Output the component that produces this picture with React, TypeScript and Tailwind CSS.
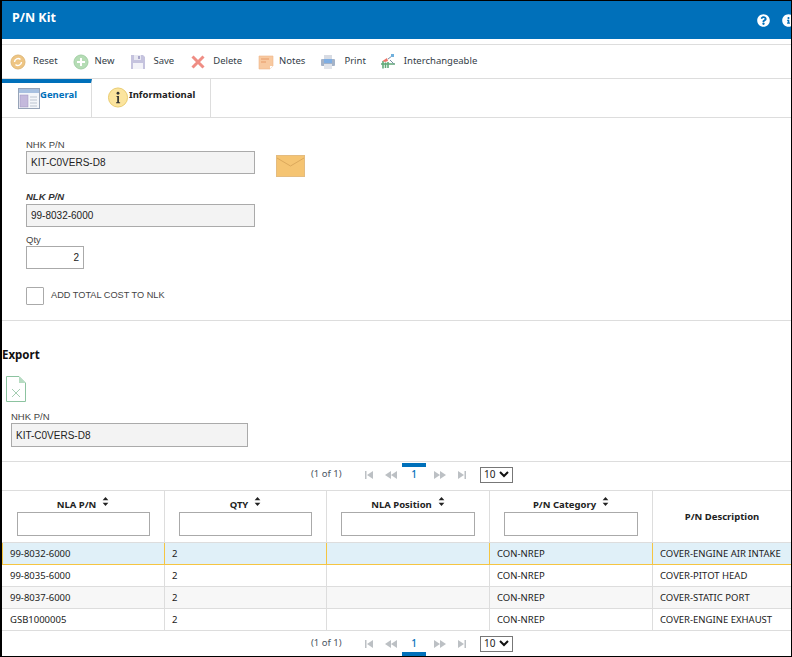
import React from "react";
import { FaQuestionCircle, FaInfoCircle } from "react-icons/fa";

const UI = "font-['Noto_Sans','Open_Sans',sans-serif]";
const AR = "font-['Liberation_Sans',Arial,sans-serif]";

const ResetIcon = () => (
  <svg width="16" height="16" viewBox="0 0 16 16"><circle cx="8" cy="8" r="7" fill="#eec583" stroke="#e0b878" /><path d="M4.500 8a3.500 3.500 0 0 1 6-2.400M11.500 8a3.500 3.500 0 0 1-6 2.400" fill="none" stroke="#fff" strokeWidth="1.400" /></svg>
);
const NewIcon = () => (
  <svg width="16" height="16" viewBox="0 0 16 16"><circle cx="8" cy="8" r="7" fill="#b5dcb5" stroke="#a3d0a5" /><path d="M8 4v8M4 8h8" stroke="#fff" strokeWidth="2" /></svg>
);
const SaveIcon = () => (
  <svg width="16" height="16" viewBox="0 0 16 16"><path d="M1 1h12l2 2v12H1z" fill="#c5c3de" /><rect x="4" y="1" width="7" height="5" fill="#e8e8f2" /><rect x="8" y="2" width="2" height="3" fill="#a9a7c9" /><rect x="3" y="9" width="10" height="6" fill="#f3f3f8" /></svg>
);
const DeleteIcon = () => (
  <svg width="16" height="16" viewBox="0 0 16 16"><path d="M2.500 2.500l11 11M13.500 2.500l-11 11" stroke="#ef8d84" strokeWidth="3" /></svg>
);
const NotesIcon = () => (
  <svg width="16" height="16" viewBox="0 0 16 16"><path d="M1 2h14v10l-3 3H1z" fill="#f8c9a0" stroke="#efb68a" strokeWidth=".6" /><path d="M3 5h8M3 8h5" stroke="#e79a68" /><path d="M12 15v-3h3z" fill="#fff" /></svg>
);
const PrintIcon = () => (
  <svg width="16" height="16" viewBox="0 0 16 16"><rect x="4" y="1" width="8" height="5" fill="#d7dbe3" /><rect x="1" y="5" width="14" height="7" rx="1" fill="#a5b3c8" /><rect x="4" y="5" width="8" height="4" fill="#7faee3" /><rect x="4" y="10" width="8" height="5" fill="#e1e4ea" /></svg>
);
const InterIcon = () => (
  <svg width="16" height="17" viewBox="0 0 16 17"><path d="M1 11h14M3 15.500V8M5.500 15V9.500M8 15V9" stroke="#62a978" strokeWidth="1.600" /><path d="M2.500 8L7 5l1 3-3 1z" fill="#ec7468" /><path d="M8 6l4-3M10 7l4 4" stroke="#7a8fa5" /><rect x="11" y="1" width="3" height="3" fill="#6fb0dd" /></svg>
);
const GeneralIcon = () => (
  <svg width="22" height="21" viewBox="0 0 22 21"><rect x=".5" y=".5" width="21" height="20" fill="#f4f6fa" stroke="#97a4b8" /><rect x="1" y="1" width="20" height="4" fill="#a8c0e0" /><rect x="2" y="7" width="8" height="12" fill="#c4b9dc" stroke="#9c93bf" strokeWidth=".5" /><path d="M12 9h7M12 12h7M12 15h7M12 18h7" stroke="#bcc4d0" /></svg>
);
const InfoIcon = () => (
  <svg width="22" height="21" viewBox="0 0 22 22"><circle cx="11" cy="11" r="10" fill="#fbe49e" stroke="#e8c96b" /><circle cx="11" cy="6.500" r="1.500" fill="#333" /><path d="M9.500 9.500h2.500v6.500h1.200v1H9v-1h1.200v-5.500H9.500z" fill="#333" /></svg>
);
const Envelope = () => (
  <svg width="29" height="22" viewBox="0 0 29 22"><rect x=".5" y=".5" width="28" height="21" fill="#f5c472" stroke="#e4bc80" /><path d="M1 3l13.500 8L28 3" fill="none" stroke="#dca95c" /></svg>
);
const Excel = () => (
  <svg width="20" height="26" viewBox="0 0 20 26"><path d="M.5.5h12.500l6.500 6.500v18.500H.5z" fill="#fff" stroke="#8cc3a0" /><path d="M13 .5v6.500h6.500z" fill="#b7dcc2" /><path d="M6 13l8 8M14 13l-8 8" stroke="#a5cdb2" /></svg>
);
const Sort = () => (
  <svg className="ml-[6px] -mt-[7px] shrink-0" width="7" height="9" viewBox="0 0 8 11"><path d="M4 0l3.500 4H.5zM4 11L.5 7h7z" fill="#222" /></svg>
);

const Tool = ({ icon, label, cls }: { icon: React.ReactNode; label: string; cls: string }) => (
  <div className={`flex items-center ${cls}`}>
    {icon}
    <span className="text-[9.500px] text-[#333d47]">{label}</span>
  </div>
);

const Field = ({ label, value, italic, box }: { label: string; value: string; italic?: boolean; box: string }) => (
  <div className={AR}>
    <div className={`text-[9.500px] ${italic ? "h-[14px] leading-[14px] font-bold italic text-[#333]" : "h-[13px] leading-[13px] text-[#444]"}`}>{label}</div>
    <div className={`flex items-center border border-[#aaa] bg-[#f3f3f3] pl-[4px] text-[10px] text-[#222] ${box}`}>{value}</div>
  </div>
);

const Pager = ({ bar }: { bar: "top" | "bottom" }) => (
  <div className={`flex items-center text-[#555] ${bar === "top" ? "h-[29px] border-t border-[#ddd] pb-[3px]" : "h-[25px]"}`}>
    <span className="ml-[309px] w-[54px] text-[9.500px] text-[#4b5563]">(1 of 1)</span>
    <svg width="8" height="10" viewBox="0 0 8 10"><path d="M0 1h1.500v8H0zM8 1v8L2 5z" fill="#bcc0c4" /></svg>
    <svg className="ml-[12px]" width="12" height="10" viewBox="0 0 12 10"><path d="M6 1v8L0 5zM12 1v8L6 5z" fill="#bcc0c4" /></svg>
    <div className="relative ml-[5px] flex h-[14px] w-[24px] items-center justify-center text-[10px] font-medium text-[#0070ba]">
      1
      <div className={`absolute left-0 h-[4px] w-[24px] bg-[#0070ba] ${bar === "top" ? "top-[-5px]" : "top-[15px]"}`} />
    </div>
    <svg className="ml-[8px]" width="12" height="10" viewBox="0 0 12 10"><path d="M0 1v8l6-4zM6 1v8l6-4z" fill="#bcc0c4" /></svg>
    <svg className="ml-[12px]" width="8" height="10" viewBox="0 0 8 10"><path d="M0 1v8l6-4zM6.500 1H8v8H6.500z" fill="#bcc0c4" /></svg>
    <div className="ml-[14px] flex h-[16px] w-[33px] items-center justify-between border border-[#777] px-[3px] text-[10px] text-[#222]">
      10
      <svg width="10" height="7" viewBox="0 0 10 7"><path d="M1 1l4 4 4-4" fill="none" stroke="#111" strokeWidth="2" /></svg>
    </div>
  </div>
);

const cols = ["w-[163px]", "w-[162px]", "w-[163px]", "w-[163px]", "flex-1"];

const Head = ({ label, cls, wide }: { label: string; cls: string; wide: string }) => (
  <div className={`${cls} flex shrink-0 flex-col items-center border-r border-[#ddd]`}>
    <div className="flex h-[21px] items-center pt-[7px] text-[9.500px] font-bold text-[#222]">
      {label}
      <Sort />
    </div>
    <div className={`h-[24px] ${wide} border border-[#aaa] bg-white`} />
  </div>
);

const rows = [
  ["99-8032-6000", "2", "", "CON-NREP", "COVER-ENGINE AIR INTAKE"],
  ["99-8035-6000", "2", "", "CON-NREP", "COVER-PITOT HEAD"],
  ["99-8037-6000", "2", "", "CON-NREP", "COVER-STATIC PORT"],
  ["GSB1000005", "2", "", "CON-NREP", "COVER-ENGINE EXHAUST"],
];

export default function App() {
  return (
    <div className={`h-[657px] w-[792px] overflow-hidden border-t border-b border-l-2 border-r border-black bg-white ${UI}`}>
      <div className="flex h-[38px] items-center justify-between bg-[#0070ba] pl-[10px]">
        <span className="pb-[3px] text-[12.500px] font-bold text-white">P/N Kit</span>
        <div className="flex h-full w-[34px] items-center gap-[12px] overflow-hidden text-white">
          <FaQuestionCircle className="shrink-0 text-[13px]" />
          <FaInfoCircle className="shrink-0 text-[13px]" />
        </div>
      </div>

      <div className="mt-[5px] flex h-[35px] items-center gap-[15px] border-y border-[#ddd] pl-[8px]">
        <Tool icon={<ResetIcon />} label="Reset" cls="gap-[7px]" />
        <Tool icon={<NewIcon />} label="New" cls="gap-[6px]" />
        <Tool icon={<SaveIcon />} label="Save" cls="ml-[1px] gap-[7px]" />
        <Tool icon={<DeleteIcon />} label="Delete" cls="ml-[1px] gap-[7px]" />
        <Tool icon={<NotesIcon />} label="Notes" cls="ml-[1px] gap-[5px]" />
        <Tool icon={<PrintIcon />} label="Print" cls="gap-[8px]" />
        <Tool icon={<InterIcon />} label="Interchangeable" cls="-ml-[1px] gap-[8px]" />
      </div>

      <div className="flex h-[39px] border-b border-[#ddd]">
        <div className="flex w-[90px] border-t-[4px] border-r border-t-[#0070ba] border-r-[#ddd] pt-[5px] pl-[16px]">
          <GeneralIcon />
          <span className="text-[9.500px] leading-[14px] font-bold text-[#0070ba]">General</span>
        </div>
        <div className="flex w-[119px] border-r border-[#ddd] pt-[8px] pl-[15px]">
          <InfoIcon />
          <span className="mt-[1px] text-[9.500px] leading-[14px] font-bold text-[#222]">Informational</span>
        </div>
      </div>

      <div className="h-[203px] border-b border-[#ddd] pt-[20px] pl-[24px]">
        <div className="flex">
          <Field label="NHK P/N" value="KIT-C0VERS-D8" box="h-[23px] w-[229px]" />
          <div className="mt-[17px] ml-[21px]"><Envelope /></div>
        </div>
        <div className="mt-[13px]"><Field label="NLK P/N" value="99-8032-6000" italic box="h-[23px] w-[229px]" /></div>
        <div className={`mt-[6px] ${AR}`}>
          <div className="h-[13px] text-[9.500px] leading-[13px] text-[#444]">Qty</div>
          <div className="flex h-[23px] w-[58px] items-center justify-end border border-[#aaa] pr-[4px] text-[10px] text-[#222]">2</div>
        </div>
        <div className={`mt-[18px] flex items-center ${AR}`}>
          <div className="h-[18px] w-[18px] rounded-[1px] border border-[#aaa]" />
          <span className="ml-[7px] text-[9.200px] text-[#444]">ADD TOTAL COST TO NLK</span>
        </div>
      </div>

      <div className="h-[140px]">
        <div className="h-[44px] pt-[26px] text-[11.500px] leading-[16px] font-bold text-[#111]">Export</div>
        <div className="mt-[11px] ml-[4px] h-[26px]"><Excel /></div>
        <div className="mt-[8px] ml-[9px]"><Field label="NHK P/N" value="KIT-C0VERS-D8" box="h-[24px] w-[237px]" /></div>
      </div>

      <Pager bar="top" />

      <div className="flex h-[53px] border-y border-[#ddd]">
        <Head label="NLA P/N" cls={cols[0]} wide="w-[133px]" />
        <Head label="QTY" cls={cols[1]} wide="w-[133px]" />
        <Head label="NLA Position" cls={cols[2]} wide="w-[134px]" />
        <Head label="P/N Category" cls={cols[3]} wide="w-[134px]" />
        <div className="flex flex-1 items-center justify-center pt-[1px] text-[9.500px] font-bold text-[#222]">P/N Description</div>
      </div>

      {rows.map((r, i) => (
        <div
          key={r[0]}
          className={`flex h-[22px] border-b text-[9.500px] text-[#222] ${i === 0 ? "border-b-[#f5c542] bg-[#e0f0f8]" : i === 2 ? "border-b-[#ddd] bg-[#f7f7f7]" : "border-b-[#ddd]"}`}
        >
          {r.map((c, j) => (
            <div
              key={j}
              className={`${cols[j]} flex shrink-0 items-center pt-[1px] ${j === 0 && i !== 0 ? "pl-[8px]" : "pl-[7px]"} ${j === 4 ? "" : i === 0 ? "border-r border-r-[#f5c542]" : "border-r border-r-[#ddd]"} ${i === 0 && j === 0 ? "border-l border-l-[#f5c542]" : ""}`}
            >
              {c}
            </div>
          ))}
        </div>
      ))}
      <Pager bar="bottom" />
    </div>
  );
}
